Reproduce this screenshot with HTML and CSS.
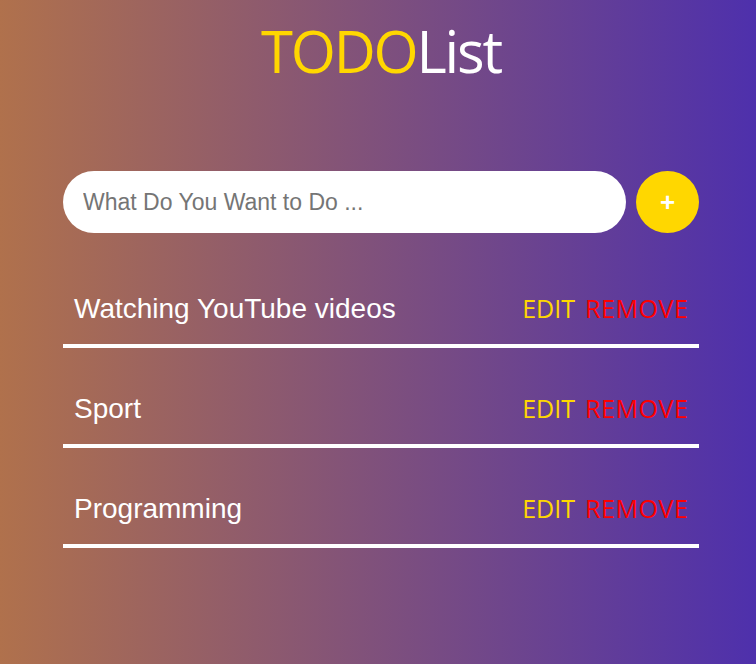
FILE: index.html
```html
<!DOCTYPE html>
<html lang="en">
<head>
<meta charset="utf-8">
<title>TODOList</title>
<link rel="stylesheet" href="styles.css">
</head>
<body>
<div class="app">
  <h1 class="title"><span class="title-todo">TODO</span><span class="title-list">List</span></h1>
  <form class="add-form">
    <input class="add-input" type="text" placeholder="What Do You Want to Do ...">
    <button class="add-btn" type="button">+</button>
  </form>
  <ul class="todo-list">
    <li class="todo-item">
      <span class="todo-text">Watching YouTube videos</span>
      <span class="todo-actions"><span class="act-edit">EDIT</span><span class="act-remove">REMOVE</span></span>
    </li>
    <li class="todo-item">
      <span class="todo-text">Sport</span>
      <span class="todo-actions"><span class="act-edit">EDIT</span><span class="act-remove">REMOVE</span></span>
    </li>
    <li class="todo-item">
      <span class="todo-text">Programming</span>
      <span class="todo-actions"><span class="act-edit">EDIT</span><span class="act-remove">REMOVE</span></span>
    </li>
  </ul>
</div>
</body>
</html>
```

FILE: styles.css
```css
html, body {
  margin: 0;
  padding: 0;
  height: 100%;
}
body {
  background: linear-gradient(to right, #b0714c, #4e30ac);
  font-family: "Liberation Sans", Arial, sans-serif;
  overflow: hidden;
}
.app {
  width: 636px;
  margin-left: 63px;
  padding-top: 10px;
}
.title {
  margin: 0;
  text-align: center;
  font-family: "Open Sans", sans-serif;
  font-weight: 400;
  font-size: 58px;
  line-height: 82px;
  letter-spacing: -2.2px;
}
.title-todo { color: #ffd700; }
.title-list { color: #ffffff; }
.add-form {
  display: flex;
  gap: 10px;
  margin: 79px 0 0;
}
.add-input {
  flex: 1;
  height: 62px;
  box-sizing: border-box;
  border: none;
  outline: none;
  border-radius: 31px;
  padding: 0 20px;
  font-family: "Liberation Sans", Arial, sans-serif;
  font-size: 23px;
  color: #333;
  background: #fff;
}
.add-input::placeholder { color: #757575; }
.add-btn {
  width: 63px;
  height: 62px;
  border: none;
  border-radius: 50%;
  background: #ffd700;
  color: #fff;
  font-family: "Liberation Sans", Arial, sans-serif;
  font-weight: 700;
  font-size: 26px;
  padding: 0;
}
.todo-list {
  list-style: none;
  margin: 15px 0 0;
  padding: 0;
}
.todo-item {
  display: flex;
  justify-content: space-between;
  align-items: baseline;
  height: 30px;
  padding: 45px 11px 21px;
  line-height: 30px;
  border-bottom: 4px solid #fff;
}
.todo-text {
  color: #fff;
  font-size: 28px;
}
.todo-actions {
  display: flex;
  gap: 10px;
  font-family: "Open Sans", sans-serif;
  font-size: 25px;
}
.act-edit { color: #ffd700; }
.act-remove { color: #ff0000; letter-spacing: 0.6px; margin-right: -0.6px; }
```
